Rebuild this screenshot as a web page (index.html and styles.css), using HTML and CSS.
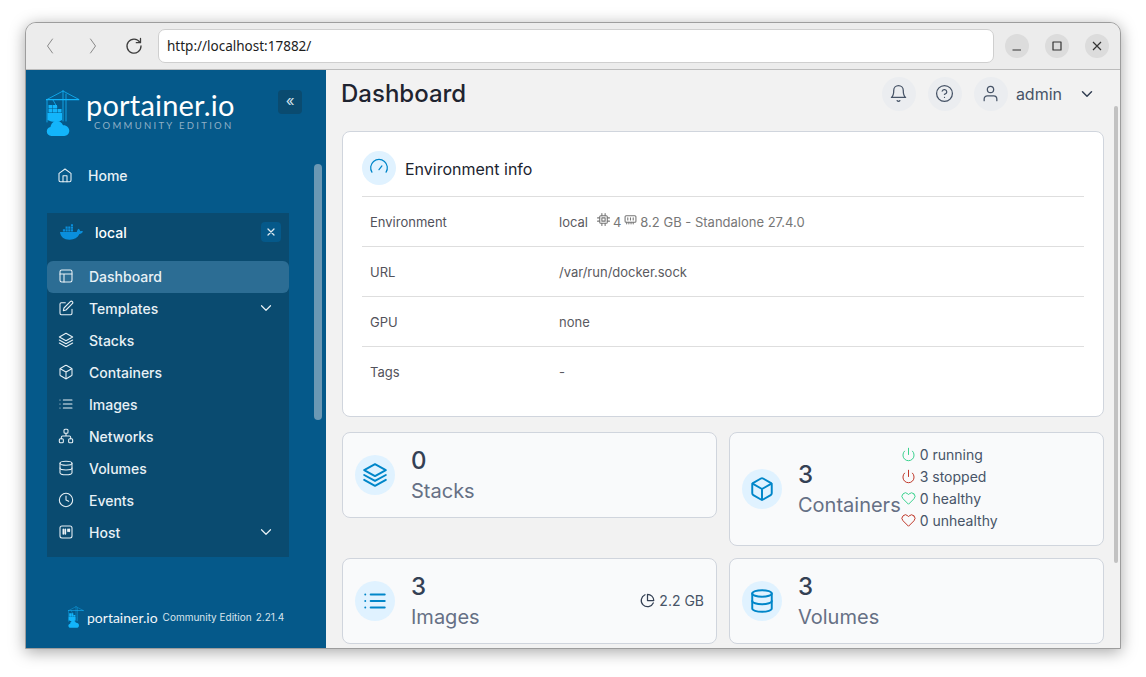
FILE: index.html
```html
<!DOCTYPE html>
<html lang="en">
<head>
    <meta charset="UTF-8">
    <title>Portainer</title>
    <link rel="stylesheet" href="styles.css">
</head>
<body>
<svg class="sprite" width="0" height="0">
    <symbol id="i-home" viewBox="0 0 24 24"><path d="M3 9.500 12 3l9 6.500V20a2 2 0 0 1-2 2H5a2 2 0 0 1-2-2z"/><path d="M9 22v-9h6v9"/></symbol>
    <symbol id="i-layout" viewBox="0 0 24 24"><rect x="3" y="3" width="18" height="18" rx="2.500"/><path d="M3 9h18M9 21V9"/></symbol>
    <symbol id="i-edit" viewBox="0 0 24 24"><path d="M11 4H5a2 2 0 0 0-2 2v14a2 2 0 0 0 2 2h14a2 2 0 0 0 2-2v-6"/><path d="M18.500 2.500a2.100 2.100 0 0 1 3 3L12 15l-4 1 1-4z"/></symbol>
    <symbol id="i-layers" viewBox="0 0 24 24"><path d="M12 2 2 7.500 12 13l10-5.500z"/><path d="m2 12 10 5.500L22 12"/><path d="m2 16.500 10 5.500 10-5.500"/></symbol>
    <symbol id="i-box" viewBox="0 0 24 24"><path d="M21 16V8a2 2 0 0 0-1-1.700l-7-4a2 2 0 0 0-2 0l-7 4A2 2 0 0 0 3 8v8a2 2 0 0 0 1 1.700l7 4a2 2 0 0 0 2 0l7-4a2 2 0 0 0 1-1.700z"/><path d="M3.300 7 12 12l8.700-5M12 22V12"/></symbol>
    <symbol id="i-list" viewBox="0 0 24 24"><path d="M8 6h13M8 12h13M8 18h13M3 6h.01M3 12h.01M3 18h.01"/></symbol>
    <symbol id="i-network" viewBox="0 0 24 24"><rect x="9" y="2" width="6" height="6" rx="1.500"/><rect x="2" y="16" width="6" height="6" rx="1.500"/><rect x="16" y="16" width="6" height="6" rx="1.500"/><path d="M5 16v-2a2 2 0 0 1 2-2h10a2 2 0 0 1 2 2v2M12 8v4"/></symbol>
    <symbol id="i-db" viewBox="0 0 24 24"><ellipse cx="12" cy="5" rx="9" ry="3"/><path d="M3 5v14c0 1.660 4 3 9 3s9-1.340 9-3V5"/><path d="M3 12c0 1.660 4 3 9 3s9-1.340 9-3"/></symbol>
    <symbol id="i-clock" viewBox="0 0 24 24"><circle cx="12" cy="12" r="10"/><path d="M12 6v6l4 2"/></symbol>
    <symbol id="i-board" viewBox="0 0 24 24"><rect x="3" y="3" width="18" height="18" rx="3"/><path d="M8 8v7M11 8v7M15 8v3M17 8v3" stroke-width="2.500"/></symbol>
    <symbol id="i-chev" viewBox="0 0 24 24"><path d="m6 9 6 6 6-6"/></symbol>
    <symbol id="i-power" viewBox="0 0 24 24"><path d="M18.400 6.600a9 9 0 1 1-12.800 0"/><path d="M12 2v10"/></symbol>
    <symbol id="i-heart" viewBox="0 0 24 24"><path d="M20.800 4.600a5.500 5.500 0 0 0-7.800 0L12 5.700l-1-1.100a5.500 5.500 0 0 0-7.800 7.800L12 21.200l8.800-8.800a5.500 5.500 0 0 0 0-7.800z"/></symbol>
    <symbol id="i-crane" viewBox="0 0 34 46">
        <path class="solid" d="M0 9h33v1.300H0z"/>
        <path class="thin" d="M1 9.500 17 1l16 8.500M17 .500V31M20 4v27M1 10v22M7 10l4 7"/>
        <path class="solid" d="M2.500 15h4v3.600h-4zM7 15h4v3.600H7zM2.500 19h4v3.600h-4zM7 19h4v3.600H7zM11.500 19h4v3.600h-4zM1.500 23h14.500v7c-3 2.500-10 2.500-14.500 0z"/>
        <path class="solid" d="M5.500 46C2.500 46 .8 43.800.8 41.500c0-2.300 1.500-4 3.700-4.400C5 33.500 7.500 31 10.800 31c3 0 5.200 1.800 6.200 4.300 3.500-.3 6.300 2.300 6.300 5.500 0 3-2.300 5.200-5 5.200z"/>
    </symbol>
</svg>

<div class="window">
    <div class="toolbar">
        <div class="nav-btns">
            <svg class="tb-icon dim" viewBox="0 0 14 20"><path d="M9.500 3 4.500 10l5 7"/></svg>
            <svg class="tb-icon dim" viewBox="0 0 14 20"><path d="m4.500 3 5 7-5 7"/></svg>
            <svg class="tb-icon reload" viewBox="0 0 20 20"><path d="M15.800 6.200A7 7 0 1 0 17 10"/><path d="M16.500 2.500v4.200h-4.200"/></svg>
        </div>
        <div class="address">http://localhost:17882/</div>
        <div class="win-btns">
            <span class="win-btn"><svg viewBox="0 0 12 12"><path d="M1.500 10h8.500"/></svg></span>
            <span class="win-btn"><svg viewBox="0 0 12 12"><rect x="2" y="2" width="8" height="8"/></svg></span>
            <span class="win-btn"><svg viewBox="0 0 12 12"><path d="m2 2 8 8M10 2l-8 8"/></svg></span>
        </div>
    </div>

    <div class="app">
        <aside class="sidebar">
            <div class="brand">
                <svg class="crane"><use href="#i-crane"/></svg>
                <div class="brand-text">
                    <div class="brand-name">portainer.io</div>
                    <div class="brand-sub">COMMUNITY EDITION</div>
                </div>
                <span class="collapse">«</span>
            </div>

            <a class="nav-item home"><svg class="ico"><use href="#i-home"/></svg>Home</a>

            <div class="env-block">
                <div class="env-head">
                    <svg class="whale" viewBox="0 0 24 16">
                        <path d="M0 8h17.500c.4-1.600 1-3 1.800-3.500 1 .6 1.600 1.600 1.700 2.700 1-.3 2-.2 3 .3-.8 1.800-2 2.500-3.700 2.600C18.500 14 15 16 10 16 4 16 .6 13 0 8z"/>
                        <path d="M3 5h2.200v2.400H3zM5.800 5H8v2.400H5.800zM8.600 5h2.200v2.400H8.600zM11.400 5h2.200v2.400h-2.200zM5.800 2.200H8v2.300H5.800zM8.600 2.200h2.200v2.300H8.600zM11.400 2.200h2.200v2.300h-2.200zM11.400 0h2.200v1.800h-2.200z"/>
                    </svg>
                    <span class="env-name">local</span>
                    <span class="env-close">
                        <svg viewBox="0 0 12 12"><path d="m3 3 6 6M9 3l-6 6"/></svg>
                    </span>
                </div>
                <a class="nav-item active"><svg class="ico"><use href="#i-layout"/></svg>Dashboard</a>
                <a class="nav-item"><svg class="ico"><use href="#i-edit"/></svg>Templates<svg class="chev"><use href="#i-chev"/></svg></a>
                <a class="nav-item"><svg class="ico"><use href="#i-layers"/></svg>Stacks</a>
                <a class="nav-item"><svg class="ico"><use href="#i-box"/></svg>Containers</a>
                <a class="nav-item"><svg class="ico"><use href="#i-list"/></svg>Images</a>
                <a class="nav-item"><svg class="ico"><use href="#i-network"/></svg>Networks</a>
                <a class="nav-item"><svg class="ico"><use href="#i-db"/></svg>Volumes</a>
                <a class="nav-item"><svg class="ico"><use href="#i-clock"/></svg>Events</a>
                <a class="nav-item"><svg class="ico"><use href="#i-board"/></svg>Host<svg class="chev"><use href="#i-chev"/></svg></a>
            </div>

            <div class="side-foot">
                <svg class="crane-small"><use href="#i-crane"/></svg>
                <span class="foot-name">portainer.io</span>
                <span class="foot-small">Community Edition</span>
                <span class="foot-small">2.21.4</span>
            </div>
            <div class="side-scroll"></div>
        </aside>

        <main class="main">
            <header class="topbar">
                <h1>Dashboard</h1>
                <div class="top-actions">
                    <span class="round">
                        <svg class="top-ico" viewBox="0 0 24 24"><path d="M18 8a6 6 0 0 0-12 0c0 7-3 9-3 9h18s-3-2-3-9"/><path d="M13.700 21a2 2 0 0 1-3.400 0"/></svg>
                    </span>
                    <span class="round">
                        <svg class="top-ico" viewBox="0 0 24 24"><circle cx="12" cy="12" r="10"/><path d="M9.100 9a3 3 0 0 1 5.800 1c0 2-3 3-3 3M12 17h.01"/></svg>
                    </span>
                    <span class="round">
                        <svg class="top-ico" viewBox="0 0 24 24"><path d="M20 21v-2a4 4 0 0 0-4-4H8a4 4 0 0 0-4 4v2"/><circle cx="12" cy="7" r="4"/></svg>
                    </span>
                    <span class="user">admin</span>
                    <svg class="user-chev"><use href="#i-chev"/></svg>
                </div>
            </header>

            <section class="info-card">
                <div class="info-head">
                    <span class="info-circle">
                        <svg viewBox="0 0 24 24"><path d="M3.500 17a10 10 0 1 1 17 0"/><path d="m12 14 3.500-4.500"/></svg>
                    </span>
                    <span class="info-title">Environment info</span>
                </div>
                <div class="info-row">
                    <div class="info-key">Environment</div>
                    <div class="info-val">
                        <span class="env-local">local</span>
                        <svg class="spec" viewBox="0 0 24 24"><rect x="5" y="5" width="14" height="14" rx="2"/><rect x="9" y="9" width="6" height="6"/><path d="M9 1v4M15 1v4M9 19v4M15 19v4M19 9h4M19 15h4M1 9h4M1 15h4"/></svg>
                        <span>4</span>
                        <svg class="spec" viewBox="0 0 24 24"><rect x="2" y="5" width="20" height="12" rx="2"/><path d="M7 9v4M12 9v4M17 9v4M5 17v3M9 17v3M13 17v3M17 17v3"/></svg>
                        <span>8.2 GB - Standalone 27.4.0</span>
                    </div>
                </div>
                <div class="info-row">
                    <div class="info-key">URL</div>
                    <div class="info-val">/var/run/docker.sock</div>
                </div>
                <div class="info-row">
                    <div class="info-key">GPU</div>
                    <div class="info-val">none</div>
                </div>
                <div class="info-row last">
                    <div class="info-key">Tags</div>
                    <div class="info-val">-</div>
                </div>
            </section>

            <section class="stats">
                <div class="stat">
                    <span class="stat-circle"><svg><use href="#i-layers"/></svg></span>
                    <div class="stat-text">
                        <div class="stat-num">0</div>
                        <div class="stat-label">Stacks</div>
                    </div>
                </div>
                <div class="stat">
                    <span class="stat-circle"><svg><use href="#i-box"/></svg></span>
                    <div class="stat-text">
                        <div class="stat-num">3</div>
                        <div class="stat-label">Containers</div>
                    </div>
                    <ul class="states">
                        <li><svg class="green"><use href="#i-power"/></svg>0 running</li>
                        <li><svg class="red"><use href="#i-power"/></svg>3 stopped</li>
                        <li><svg class="green"><use href="#i-heart"/></svg>0 healthy</li>
                        <li><svg class="red"><use href="#i-heart"/></svg>0 unhealthy</li>
                    </ul>
                </div>
                <div class="stat">
                    <span class="stat-circle"><svg><use href="#i-list"/></svg></span>
                    <div class="stat-text">
                        <div class="stat-num">3</div>
                        <div class="stat-label">Images</div>
                    </div>
                    <div class="stat-size">
                        <svg viewBox="0 0 24 24"><path d="M21.200 15.900A10 10 0 1 1 8 2.800"/><path d="M22 12A10 10 0 0 0 12 2v10z"/></svg>
                        2.2 GB
                    </div>
                </div>
                <div class="stat">
                    <span class="stat-circle"><svg><use href="#i-db"/></svg></span>
                    <div class="stat-text">
                        <div class="stat-num">3</div>
                        <div class="stat-label">Volumes</div>
                    </div>
                </div>
            </section>
            <div class="main-scroll"></div>
        </main>
    </div>
</div>
</body>
</html>
```

FILE: styles.css
```css
* {
    box-sizing: border-box;
}

html, body {
    margin: 0;
    height: 100%;
    overflow: hidden;
    background-color: #fff;
}

body {
    padding: 22px 0 0 25px;
    font-family: Inter, "Liberation Sans", sans-serif;
}

svg {
    fill: none;
    stroke: currentColor;
    stroke-width: 2;
    stroke-linecap: round;
    stroke-linejoin: round;
}

.sprite {
    position: absolute;
}

.window {
    width: 1096px;
    height: 627px;
    border: 1px solid #9d9d9d;
    border-radius: 11px 11px 0 0;
    overflow: hidden;
    background-color: #f2f2f2;
    box-shadow: 0 3px 16px rgba(0, 0, 0, 0.35);
}

/* browser chrome */
.toolbar {
    display: flex;
    align-items: center;
    height: 47px;
    padding: 0 11px 1px 0;
    background-color: #ececec;
    border-bottom: 1px solid #bcbcbc;
}

.nav-btns {
    display: flex;
    align-items: center;
    width: 132px;
    padding-left: 17px;
}

.tb-icon {
    width: 14px;
    height: 20px;
    stroke-width: 1;
}

.tb-icon.dim {
    color: #8a8a8a;
    margin-right: 28px;
}

.tb-icon.dim + .tb-icon.dim {
    margin-left: 1px;
    margin-right: 24px;
}

.tb-icon.reload {
    width: 20px;
    color: #3d3d3d;
    stroke-width: 1.300;
}

.address {
    flex: 1;
    height: 34px;
    line-height: 32px;
    padding-left: 8px;
    font-family: "Noto Sans", sans-serif;
    font-size: 13.500px;
    color: #1d1d1d;
    background-color: #fff;
    border: 1px solid #cfcfcf;
    border-radius: 7px;
}

.win-btns {
    display: flex;
    gap: 16px;
    margin-left: 11px;
}

.win-btn {
    display: flex;
    align-items: center;
    justify-content: center;
    width: 24px;
    height: 24px;
    border-radius: 50%;
    background-color: #dcdcdc;
}

.win-btn svg {
    width: 12px;
    height: 12px;
    color: #333;
    stroke-width: 1.200;
    stroke-linecap: butt;
}

.app {
    display: flex;
    height: 578px;
}

/* sidebar */
.sidebar {
    position: relative;
    flex: 0 0 300px;
    min-width: 0;
    padding: 0 37px 0 21px;
    background-color: #05598a;
    color: #e8f1f6;
}

.brand {
    position: relative;
    display: flex;
    height: 92px;
    padding-top: 20px;
}

.crane {
    width: 34px;
    height: 46px;
    margin-left: -1px;
    color: #13b5fb;
}

.solid {
    fill: currentColor;
    stroke: none;
}

.thin {
    stroke-width: 0.800;
}

.brand-text {
    margin-left: 6px;
}

.brand-name {
    font-family: Lato, sans-serif;
    font-size: 29px;
    line-height: 30px;
    color: #fff;
    letter-spacing: 0.2px;
    white-space: nowrap;
}

.brand-sub {
    margin-left: 8px;
    font-family: Lato, sans-serif;
    font-size: 9.500px;
    line-height: 12px;
    letter-spacing: 2.300px;
    color: #8fb0c6;
    white-space: nowrap;
}

.collapse {
    position: absolute;
    top: 20px;
    left: 231px;
    width: 24px;
    height: 24px;
    border-radius: 4px;
    background-color: #0a4b70;
    color: #cfe0ea;
    font-size: 15px;
    line-height: 21px;
    text-align: center;
}

.nav-item {
    display: flex;
    align-items: center;
    height: 32px;
    padding: 0 0 2px 11px;
    font-size: 14px;
    font-weight: 500;
    color: #e8f1f6;
    border-radius: 6px;
}

.ico {
    flex: 0 0 16px;
    width: 16px;
    height: 16px;
    margin-right: 15px;
    stroke-width: 1.600;
}

.chev {
    width: 18px;
    height: 18px;
    margin-left: auto;
    margin-right: 14px;
    stroke-width: 1.600;
}

.home {
    margin-top: -2px;
    margin-bottom: 21px;
    padding-left: 10px;
}

.env-block {
    width: 242px;
    height: 344px;
    background-color: #0a4b70;
}

.env-head {
    display: flex;
    align-items: center;
    height: 48px;
    padding: 0 8px 10px 13px;
}

.whale {
    width: 23px;
    height: 16px;
    fill: #0a8fdc;
    stroke: none;
}

.env-name {
    margin-left: 12px;
    font-size: 14px;
    font-weight: 500;
    color: #fff;
}

.env-close {
    display: flex;
    align-items: center;
    justify-content: center;
    width: 20px;
    height: 20px;
    margin-left: auto;
    border-radius: 4px;
    background-color: #05598a;
}

.env-close svg {
    width: 12px;
    height: 12px;
    stroke-width: 1.300;
    color: #dbe8ef;
}

.active {
    background-color: #2c6d94;
}

.side-foot {
    display: flex;
    align-items: center;
    margin: 49px 0 0 21px;
    white-space: nowrap;
}

.crane-small {
    width: 16px;
    height: 22px;
    margin-right: 3px;
    color: #13b5fb;
}

.foot-name {
    font-family: Lato, sans-serif;
    font-size: 14px;
    color: #f2f6f9;
    margin-right: 5px;
}

.foot-small {
    font-size: 10px;
    color: #d8e4ec;
    margin-right: 4px;
}

.side-scroll {
    position: absolute;
    top: 94px;
    right: 4px;
    width: 8px;
    height: 256px;
    border-radius: 4px;
    background-color: #6b98b4;
}

/* main area */
.main {
    position: relative;
    flex: 1;
    min-width: 0;
    padding: 0 16px;
    overflow: hidden;
}

.topbar {
    display: flex;
    align-items: center;
    justify-content: space-between;
    height: 47px;
    margin-bottom: 14px;
}

h1 {
    margin: -1px 0 0 -1px;
    font-size: 24px;
    font-weight: 500;
    color: #1f2430;
}

.top-actions {
    display: flex;
    align-items: center;
    gap: 12px;
    padding-right: 8px;
}

.round {
    display: flex;
    align-items: center;
    justify-content: center;
    width: 34px;
    height: 34px;
    border-radius: 50%;
    background-color: #ebedf0;
}

.top-ico {
    width: 19px;
    height: 19px;
    color: #475467;
    stroke-width: 1.600;
}

.user {
    margin-left: -4px;
    font-size: 16px;
    color: #475467;
}

.user-chev {
    width: 18px;
    height: 18px;
    margin-left: 4px;
    color: #344054;
}

.info-card {
    height: 286px;
    padding: 19px 19px 0;
    background-color: #fff;
    border: 1px solid #d0d5dd;
    border-radius: 8px;
}

.info-head {
    display: flex;
    align-items: center;
    height: 46px;
    padding-bottom: 11px;
    border-bottom: 1px solid #dedede;
}

.info-circle {
    display: flex;
    align-items: center;
    justify-content: center;
    width: 34px;
    height: 34px;
    border-radius: 50%;
    background-color: #e0f2ff;
    color: #0086c9;
}

.info-circle svg {
    width: 20px;
    height: 20px;
    stroke-width: 1.500;
}

.info-title {
    margin: 2px 0 0 9px;
    font-size: 16px;
    font-weight: 400;
    color: #1c2430;
}

.info-row {
    display: flex;
    align-items: center;
    height: 50px;
    padding-left: 8px;
    font-size: 13px;
    border-bottom: 1px solid #dedede;
}

.info-row.last {
    border-bottom: 0;
}

.info-key {
    flex: 0 0 189px;
    color: #52525b;
}

.info-val {
    display: flex;
    align-items: center;
    gap: 3px;
    color: #5a5a60;
}

.info-val span {
    color: #777;
}

.info-val .env-local {
    margin-right: 6px;
    color: #5a5a60;
}

.spec {
    width: 13px;
    height: 13px;
    color: #777;
    stroke-width: 2;
    margin-top: -4px;
}

.stats {
    display: grid;
    grid-template-columns: 375px 375px;
    gap: 12px;
    align-items: start;
    margin-top: 15px;
}

.stat {
    display: flex;
    align-items: center;
    min-height: 86px;
    padding: 0 12px;
    background-color: #f9fafb;
    border: 1px solid #d0d5dd;
    border-radius: 8px;
}

.stat-circle {
    display: flex;
    flex: 0 0 40px;
    align-items: center;
    justify-content: center;
    height: 40px;
    border-radius: 50%;
    background-color: #e0f2ff;
    color: #0086c9;
}

.stat-circle svg {
    width: 26px;
    height: 26px;
    stroke-width: 1.800;
}

.stat-text {
    margin-left: 16px;
    padding-top: 2px;
}

.stat-num {
    font-size: 24px;
    font-weight: 500;
    line-height: 30px;
    color: #344054;
}

.stat-label {
    font-size: 20px;
    line-height: 30px;
    color: #667085;
}

.states {
    margin: 0;
    padding: 10px 0 14px;
    list-style: none;
}

.states li {
    display: flex;
    align-items: center;
    gap: 4px;
    height: 22px;
    font-size: 14px;
    color: #475467;
}

.states svg {
    width: 15px;
    height: 15px;
    stroke-width: 1.600;
}

.green {
    color: #3bd28f;
}

.red {
    color: #c0392b;
}

.stat-size {
    display: flex;
    align-items: center;
    gap: 4px;
    margin-top: -2px;
    margin-left: auto;
    font-size: 14px;
    color: #475467;
}

.stat-size svg {
    width: 15px;
    height: 15px;
    color: #344054;
}

.main-scroll {
    position: absolute;
    top: 36px;
    right: 2px;
    width: 4px;
    height: 457px;
    background-color: #c2c2c2;
    border-radius: 2px;
}
```
